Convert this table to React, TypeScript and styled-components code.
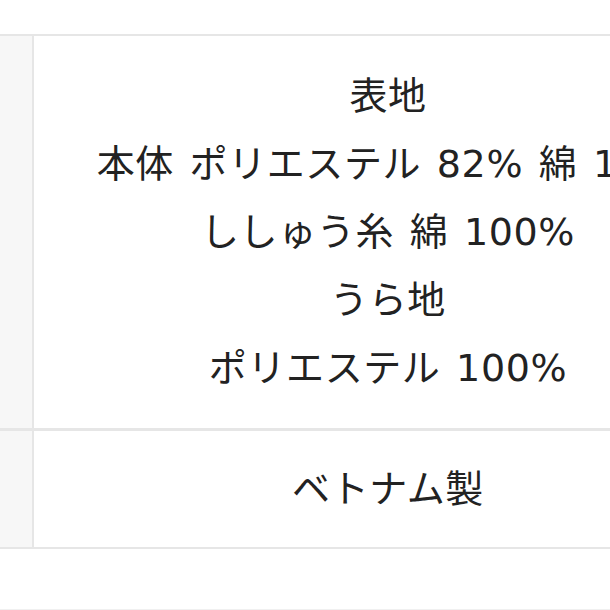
import styled, { createGlobalStyle } from "styled-components";

const GlobalStyle = createGlobalStyle`
    html, body {
        margin: 0;
        padding: 0;
        background: #ffffff;
        overflow: hidden;
    }
    body {
        font-family: "DejaVu Sans", "Noto Sans CJK JP", sans-serif;
        color: #222222;
    }
`;

const Page = styled.div`
    width: 610px;
    height: 610px;
    overflow: hidden;
    padding-top: 34px;
    box-sizing: border-box;
    border-bottom: 1px solid #f0f0f0;
`;

const SpecTable = styled.table`
    width: 742px;
    border-collapse: collapse;
    border-top: 2px solid #e6e6e6;
    border-bottom: 2px solid #e6e6e6;
`;

const Row = styled.tr`
    & + & {
        border-top: 3px solid #e6e6e6;
    }
`;

const HeadCell = styled.th`
    width: 32px;
    padding: 0;
    background: #f7f7f7;
    border-right: 2px solid #e6e6e6;
`;

const ValueCell = styled.td<{ $pad: number }>`
    padding: ${({ $pad }) => $pad}px 0;
    text-align: center;
    font-size: 38px;
    line-height: 68px;
    font-weight: 400;
    word-spacing: 3px;
    letter-spacing: 0.6px;
    white-space: nowrap;
`;

interface Spec {
    label: string;
    lines: string[];
    pad: number;
}

const specs: Spec[] = [
    {
        label: "素材",
        pad: 26,
        lines: [
            "表地",
            "本体 ポリエステル 82% 綿 18%",
            "ししゅう糸 綿 100%",
            "うら地",
            "ポリエステル 100%",
        ],
    },
    { label: "原産国", pad: 24, lines: ["ベトナム製"] },
];

export default function App() {
    return (
        <>
            <GlobalStyle />
            <Page>
                <SpecTable>
                    <tbody>
                        {specs.map((spec) => (
                            <Row key={spec.label}>
                                <HeadCell aria-label={spec.label} />
                                <ValueCell $pad={spec.pad}>
                                    {spec.lines.map((line, i) => (
                                        <div key={i}>{line}</div>
                                    ))}
                                </ValueCell>
                            </Row>
                        ))}
                    </tbody>
                </SpecTable>
            </Page>
        </>
    );
}
